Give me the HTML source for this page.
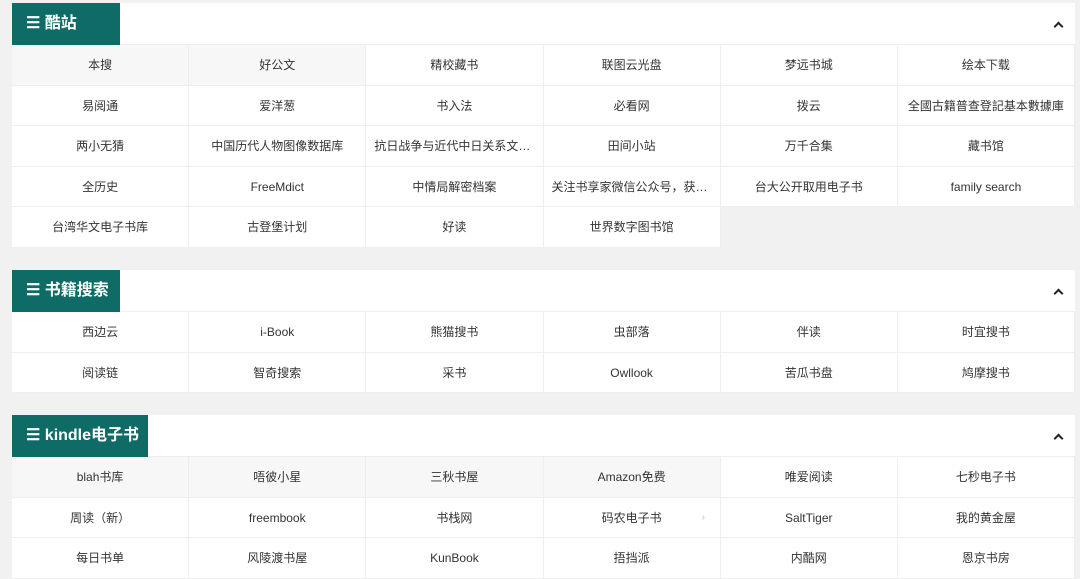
<!DOCTYPE html>
<html><head><meta charset="utf-8"><style>
*{margin:0;padding:0;box-sizing:border-box}
body{width:1080px;height:575px;overflow:hidden;background:#f1f1f1;font-family:"Liberation Sans","Noto Sans CJK SC",sans-serif;position:relative}
.p{position:absolute;left:12px;width:1063px;background:#fff}
.h{height:42px;position:relative;border-bottom:1px solid #eee}
.t{position:absolute;left:0;top:0;height:42px;background:#0f6b66;color:#fff;font-weight:bold;font-size:16px;line-height:42px;padding-left:14px}
.car{position:absolute;right:13px;top:20px;width:7px;height:7px;border-left:2.5px solid #222;border-top:2.5px solid #222;transform:rotate(45deg)}
.g{display:grid;grid-template-columns:repeat(6,1fr)}
.g div{height:40.5px;line-height:40px;text-align:center;font-size:12px;color:#333;border-right:1px solid #eee;border-bottom:1px solid #eee;white-space:nowrap;overflow:hidden;padding:0 8px;text-overflow:ellipsis;background:#fff}
.g div.s{background:#f7f7f7}
.g div.e{border:none;background:#f1f1f1}
</style></head><body>
<div class="p" style="top:3px">
<div class="h"><div class="t" style="width:108px">☰ 酷站</div><div class="car"></div></div>
<div class="g">
<div class="s">本搜</div><div class="s">好公文</div><div>精校藏书</div><div>联图云光盘</div><div>梦远书城</div><div>绘本下载</div>
<div>易阅通</div><div>爱洋葱</div><div>书入法</div><div>必看网</div><div>拨云</div><div>全國古籍普查登記基本數據庫</div>
<div>两小无猜</div><div>中国历代人物图像数据库</div><div>抗日战争与近代中日关系文献数据</div><div>田间小站</div><div>万千合集</div><div>藏书馆</div>
<div>全历史</div><div>FreeMdict</div><div>中情局解密档案</div><div>关注书享家微信公众号，获取更多</div><div>台大公开取用电子书</div><div>family search</div>
<div>台湾华文电子书库</div><div>古登堡计划</div><div>好读</div><div>世界数字图书馆</div><div class="e"></div><div class="e"></div>
</div></div>
<div class="p" style="top:270px">
<div class="h"><div class="t" style="width:108px">☰ 书籍搜索</div><div class="car"></div></div>
<div class="g">
<div>西边云</div><div>i-Book</div><div>熊猫搜书</div><div>虫部落</div><div>伴读</div><div>时宜搜书</div>
<div>阅读链</div><div>智奇搜索</div><div>采书</div><div>Owllook</div><div>苦瓜书盘</div><div>鸠摩搜书</div>
</div></div>
<div class="p" style="top:415px">
<div class="h"><div class="t" style="width:136px">☰ kindle电子书</div><div class="car"></div></div>
<div class="g">
<div class="s">blah书库</div><div class="s">唔彼小星</div><div class="s">三秋书屋</div><div class="s">Amazon免费</div><div>唯爱阅读</div><div>七秒电子书</div>
<div>周读（新）</div><div>freembook</div><div>书栈网</div><div>码农电子书<span style="position:absolute;margin-left:40px;color:#bbb;font-size:10px">›</span></div><div>SaltTiger</div><div>我的黄金屋</div>
<div>每日书单</div><div>风陵渡书屋</div><div>KunBook</div><div>捂挡派</div><div>内酷网</div><div>恩京书房</div>
</div></div>
</body></html>
